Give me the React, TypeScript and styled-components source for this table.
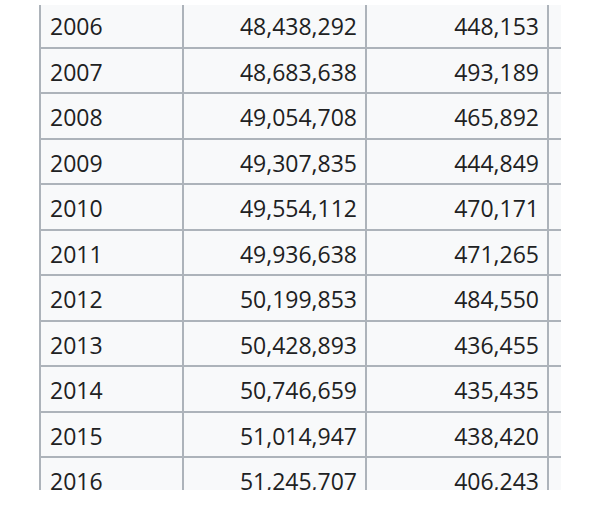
import styled, { createGlobalStyle } from "styled-components";

const GlobalStyle = createGlobalStyle`
  html, body {
    margin: 0;
    padding: 0;
    background: #ffffff;
  }
`;

// the screenshot shows only a slice of a longer table
const Viewport = styled.div`
  margin: 5px 0 0 39px;
  width: 522px;
  height: 485px;
  overflow: hidden;
`;

const Table = styled.table`
  margin-top: -4px;
  border-collapse: collapse;
  table-layout: fixed;
  width: 658px;
  background: #f8f9fa;
  font-family: "Open Sans", "Noto Sans", sans-serif;
  font-size: 23px;
  color: #202122;
`;

const Col = styled.col<{ $w: number }>`
  width: ${(p) => p.$w}px;
`;

const Row = styled.tr`
  height: 45.5px;
`;

const Cell = styled.td<{ $num?: boolean }>`
  border: 2px solid #adb3ba;
  padding: 5px 8px 0 9px;
  text-align: ${(p) => (p.$num ? "right" : "left")};
  vertical-align: middle;
  white-space: nowrap;
  line-height: 1.3;
`;

const rows = [
  ["2006", "48,438,292", "448,153"],
  ["2007", "48,683,638", "493,189"],
  ["2008", "49,054,708", "465,892"],
  ["2009", "49,307,835", "444,849"],
  ["2010", "49,554,112", "470,171"],
  ["2011", "49,936,638", "471,265"],
  ["2012", "50,199,853", "484,550"],
  ["2013", "50,428,893", "436,455"],
  ["2014", "50,746,659", "435,435"],
  ["2015", "51,014,947", "438,420"],
  ["2016", "51,245,707", "406,243"],
];

const App = () => {
  return (
    <>
      <GlobalStyle />
      <Viewport>
        <Table>
          <colgroup>
            <Col $w={143} />
            <Col $w={183} />
            <Col $w={182} />
            <Col $w={150} />
          </colgroup>
          <tbody>
            {rows.map(([year, total, births]) => (
              <Row key={year}>
                <Cell>{year}</Cell>
                <Cell $num>{total}</Cell>
                <Cell $num>{births}</Cell>
                <Cell />
              </Row>
            ))}
          </tbody>
        </Table>
      </Viewport>
    </>
  );
};

export default App;
